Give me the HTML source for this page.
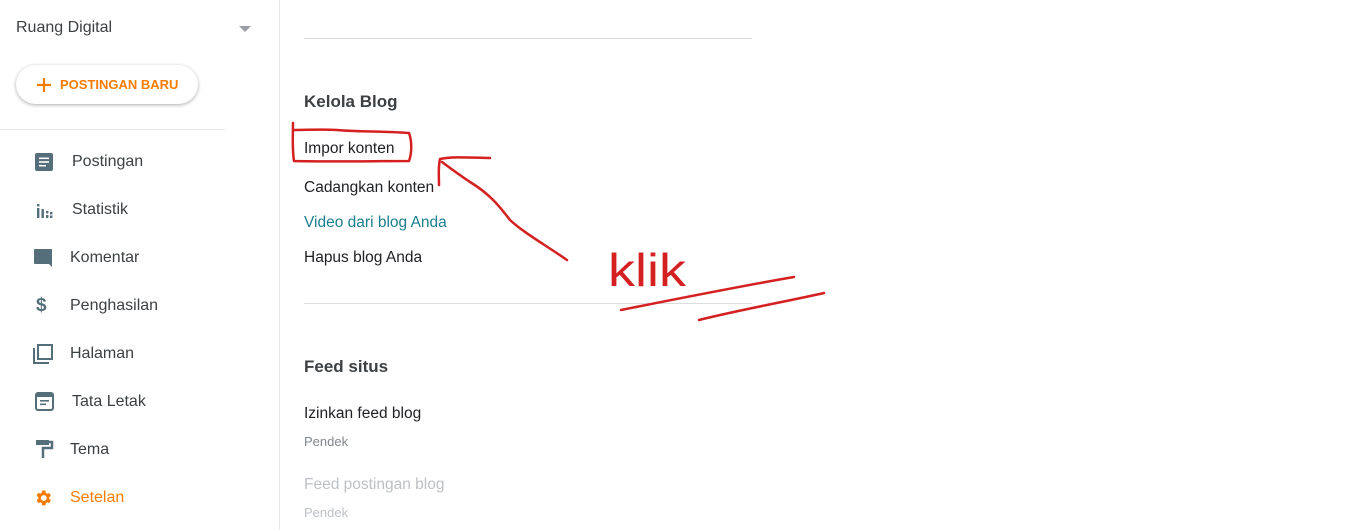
<!DOCTYPE html>
<html><head><meta charset="utf-8"><style>
*{margin:0;padding:0;box-sizing:border-box}
body{width:1347px;height:530px;background:#fff;font-family:"Liberation Sans",sans-serif;position:relative;overflow:hidden;color:#202124}
.side{position:absolute;left:0;top:0;width:280px;height:530px;border-right:1px solid #e8e8e8}
.t{position:absolute;font-size:16px;white-space:nowrap}
.nav{position:absolute;left:0;font-size:16px;color:#3c4043}
.ic{position:absolute}
.line{position:absolute;height:1px;background:#dadce0}
</style></head><body>
<div class="side">
<div class="t" style="left:16px;top:19px;color:#3c4043">Ruang Digital</div>
<div style="position:absolute;left:239px;top:26px;width:0;height:0;border-left:6px solid transparent;border-right:6px solid transparent;border-top:6px solid #9aa0a6"></div>
<div style="position:absolute;left:16px;top:65px;width:182px;height:39px;border-radius:20px;background:#fff;box-shadow:0 1px 3px rgba(60,64,67,.3),0 1px 4px rgba(60,64,67,.15)"></div>
<svg class="ic" style="left:36px;top:77px" width="16" height="16"><path d="M8 1v14M1 8h14" stroke="#f57c00" stroke-width="2.2"/></svg>
<div class="t" style="left:60px;top:77px;font-size:13px;font-weight:bold;color:#f57c00">POSTINGAN BARU</div>
<div class="line" style="left:0;top:129px;width:225px;background:#e8e8e8"></div>
<svg class="ic" style="left:34px;top:152px" width="20" height="20" viewBox="0 0 20 20"><rect x="1" y="1" width="18" height="18" rx="2" fill="#546e7a"/><rect x="5" y="5.5" width="10" height="1.6" fill="#fff"/><rect x="5" y="9.2" width="10" height="1.6" fill="#fff"/><rect x="5" y="12.9" width="7" height="1.6" fill="#fff"/></svg>
<div class="nav" style="left:72px;top:153px">Postingan</div>
<svg class="ic" style="left:36px;top:203px" width="18" height="16"><rect x="1" y="1" width="2.4" height="2.4" fill="#546e7a"/><rect x="1" y="5" width="2.4" height="10" fill="#546e7a"/><rect x="5.5" y="6" width="2.4" height="9" fill="#546e7a"/><rect x="10" y="8" width="2.4" height="2.4" fill="#546e7a"/><rect x="10" y="12" width="2.4" height="3" fill="#546e7a"/><rect x="14" y="9" width="2.4" height="2.4" fill="#546e7a"/><rect x="14" y="12.5" width="2.4" height="2.5" fill="#546e7a"/></svg>
<div class="nav" style="left:72px;top:201px">Statistik</div>
<svg class="ic" style="left:33px;top:248px" width="20" height="20" viewBox="0 0 20 20"><path d="M2 1h16a1 1 0 0 1 1 1v14l0 3-3-3H2a1 1 0 0 1-1-1V2a1 1 0 0 1 1-1z" fill="#546e7a"/></svg>
<div class="nav" style="left:70px;top:249px">Komentar</div>
<div class="nav" style="left:36px;top:295px;font-size:19px;font-weight:bold;color:#546e7a">$</div>
<div class="nav" style="left:70px;top:297px">Penghasilan</div>
<svg class="ic" style="left:32px;top:343px" width="22" height="22" viewBox="0 0 22 22"><path d="M2 5v15h15" fill="none" stroke="#546e7a" stroke-width="2"/><rect x="6" y="2" width="14" height="14" fill="none" stroke="#546e7a" stroke-width="2"/></svg>
<div class="nav" style="left:70px;top:345px">Halaman</div>
<svg class="ic" style="left:35px;top:392px" width="20" height="20" viewBox="0 0 20 20"><rect x="1" y="1" width="17" height="17" rx="2" fill="none" stroke="#546e7a" stroke-width="2"/><rect x="1" y="1" width="17" height="4" fill="#546e7a"/><rect x="5" y="8" width="9" height="1.6" fill="#546e7a"/><rect x="5" y="11.5" width="6" height="1.6" fill="#546e7a"/></svg>
<div class="nav" style="left:72px;top:393px">Tata Letak</div>
<svg class="ic" style="left:36px;top:440px" width="18" height="20" viewBox="0 0 18 20"><rect x="0" y="0" width="13" height="5" fill="#546e7a"/><path d="M13 2h3v6H7v10" fill="none" stroke="#546e7a" stroke-width="2.5"/></svg>
<div class="nav" style="left:70px;top:441px">Tema</div>
<svg class="ic" style="left:33px;top:488px" width="20" height="20" viewBox="0 0 24 24"><path fill="#f57c00" d="M19.4 13a7.5 7.5 0 0 0 0-2l2.1-1.6-2-3.5-2.5 1a7.3 7.3 0 0 0-1.7-1L14.9 3h-4l-.4 2.7a7.3 7.3 0 0 0-1.7 1l-2.5-1-2 3.5L6.4 11a7.5 7.5 0 0 0 0 2l-2.1 1.6 2 3.5 2.5-1a7.3 7.3 0 0 0 1.7 1l.4 2.7h4l.4-2.7a7.3 7.3 0 0 0 1.7-1l2.5 1 2-3.5zM12.9 15.5a3.5 3.5 0 1 1 0-7 3.5 3.5 0 0 1 0 7z"/></svg>
<div class="nav" style="left:70px;top:489px;color:#f57c00">Setelan</div>
</div>

<div class="line" style="left:304px;top:38px;width:448px"></div>
<div class="t" style="left:304px;top:92px;font-size:17px;font-weight:bold;color:#3c4043">Kelola Blog</div>
<div class="t" style="left:304px;top:140px;font-size:15.5px">Impor konten</div>
<div class="t" style="left:304px;top:179px;font-size:15.5px">Cadangkan konten</div>
<div class="t" style="left:304px;top:214px;font-size:15.5px;color:#1a7f8e">Video dari blog Anda</div>
<div class="t" style="left:304px;top:249px;font-size:15.5px">Hapus blog Anda</div>
<div class="line" style="left:304px;top:303px;width:448px"></div>
<div class="t" style="left:304px;top:357px;font-size:17px;font-weight:bold;color:#3c4043">Feed situs</div>
<div class="t" style="left:304px;top:405px;font-size:15.5px">Izinkan feed blog</div>
<div class="t" style="left:304px;top:434px;font-size:13px;color:#80868b">Pendek</div>
<div class="t" style="left:304px;top:476px;font-size:15.5px;color:#bdc1c6">Feed postingan blog</div>
<div class="t" style="left:304px;top:505px;font-size:13px;color:#bdc1c6">Pendek</div>

<svg style="position:absolute;left:0;top:0" width="1347" height="530">
<g fill="none" stroke="#d42020" stroke-width="2.5" stroke-linecap="round" stroke-linejoin="round">
<path d="M293 123c0 12-1 26 1 38 40 1 80 0 115 0 3-8 3-20 0-28-25-2-50-1-72-3-15-1-30 0-44 0"/>
<path d="M490 158c-16 0-36-2-50 1-2 8-1 16-1 26"/>
<path d="M442 162c12 9 22 16 28 20 20 12 30 25 40 38 14 13 34 24 57 40"/>
<path d="M621 310c60-12 120-24 173-33"/>
<path d="M699 320c40-10 85-18 125-27"/>
</g>
<text x="608" y="286" font-family="Liberation Sans Narrow, Liberation Sans, sans-serif" font-size="46" fill="#d42020" textLength="78" lengthAdjust="spacingAndGlyphs">klik</text>
</svg>
</body></html>
